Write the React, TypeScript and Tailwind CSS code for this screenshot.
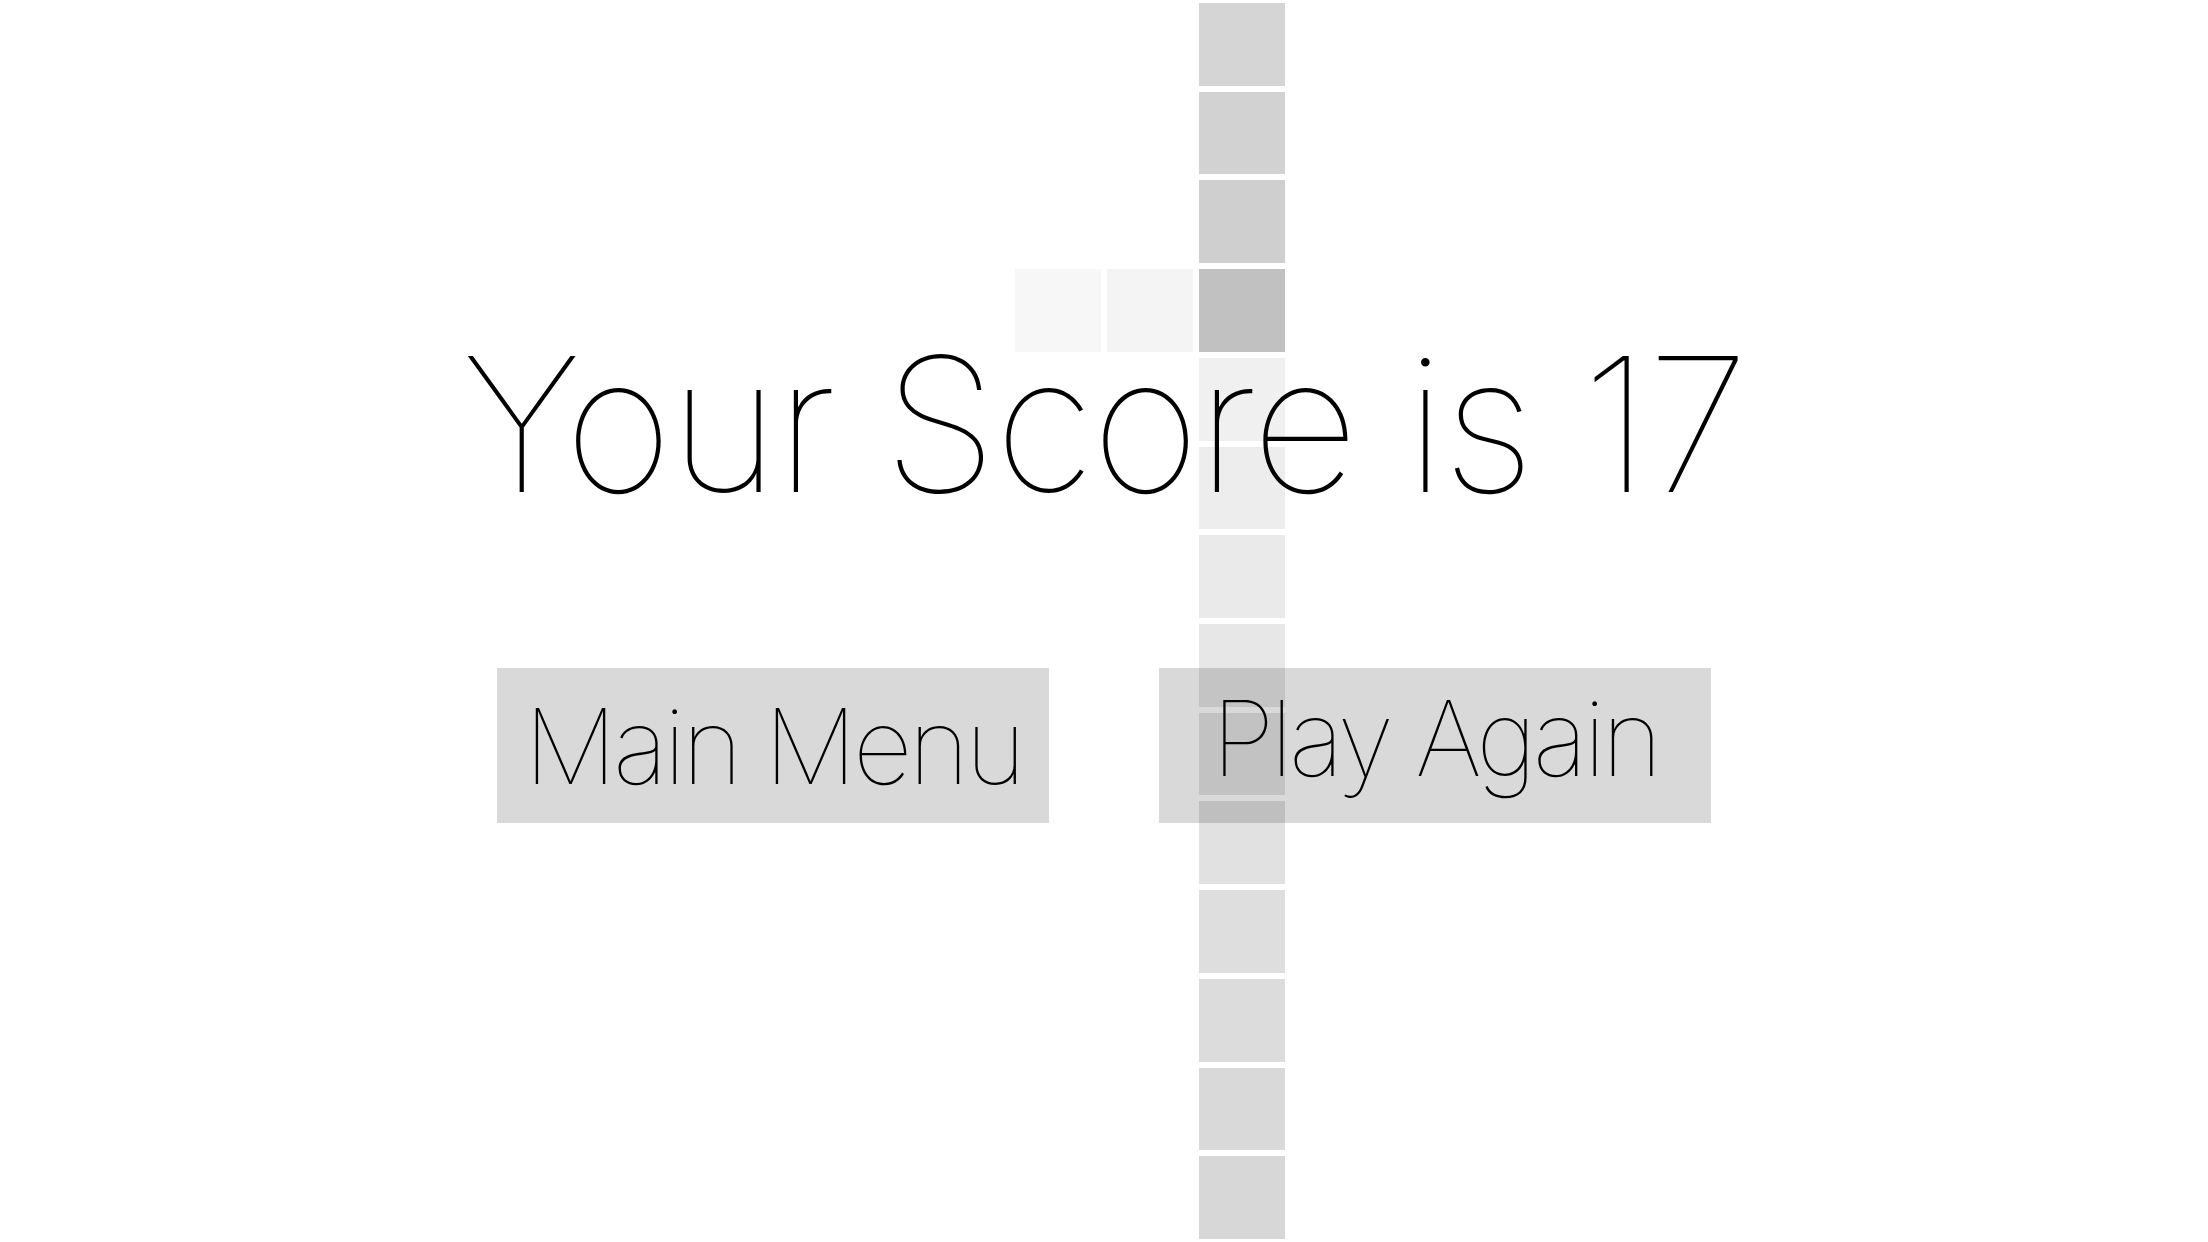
import React from "react";

type Block = { c: string; r: string; bg: string };

const blocks: Block[] = [
  { c: "col-start-12", r: "row-start-4", bg: "bg-[#f7f7f7]" },
  { c: "col-start-13", r: "row-start-4", bg: "bg-[#f4f4f4]" },
  { c: "col-start-14", r: "row-start-1", bg: "bg-[#d5d5d5]" },
  { c: "col-start-14", r: "row-start-2", bg: "bg-[#d2d2d2]" },
  { c: "col-start-14", r: "row-start-3", bg: "bg-[#cfcfcf]" },
  { c: "col-start-14", r: "row-start-4", bg: "bg-[#c1c1c1]" },
  { c: "col-start-14", r: "row-start-5", bg: "bg-[#f0f0f0]" },
  { c: "col-start-14", r: "row-start-6", bg: "bg-[#ededed]" },
  { c: "col-start-14", r: "row-start-7", bg: "bg-[#eaeaea]" },
  { c: "col-start-14", r: "row-start-8", bg: "bg-[#e7e7e7]" },
  { c: "col-start-14", r: "row-start-9", bg: "bg-[#e4e4e4]" },
  { c: "col-start-14", r: "row-start-10", bg: "bg-[#e1e1e1]" },
  { c: "col-start-14", r: "row-start-11", bg: "bg-[#dedede]" },
  { c: "col-start-14", r: "row-start-12", bg: "bg-[#dcdcdc]" },
  { c: "col-start-14", r: "row-start-13", bg: "bg-[#d9d9d9]" },
  { c: "col-start-14", r: "row-start-14", bg: "bg-[#d7d7d7]" },
];

export default function App() {
  return (
    <div
      className="relative w-screen h-screen overflow-hidden bg-white text-black"
      style={{ fontFamily: "Inter, 'Helvetica Neue', 'Liberation Sans', sans-serif" }}
    >
      {/* game board */}
      <div className="absolute inset-0 grid grid-cols-[repeat(24,1fr)] grid-rows-[repeat(14,1fr)]">
        {blocks.map((b, i) => (
          <div key={i} className={`${b.c} ${b.r} m-[3px] ${b.bg}`} />
        ))}
      </div>

      {/* overlay content */}
      <div className="absolute inset-0 flex flex-col items-center">
        <h1 className="mt-[331px] text-[187px] leading-none font-thin tracking-[-3px] whitespace-nowrap">
          Your Score is 17
        </h1>
        <div className="mt-[150px] flex gap-[110px]">
          <button className="w-[552px] h-[155px] bg-black/15 flex items-center justify-center text-[104px] leading-none font-thin tracking-[-4px] whitespace-nowrap">
            Main Menu
          </button>
          <button className="w-[552px] h-[155px] bg-black/15 flex items-center justify-center pb-[16px] text-[104px] leading-none font-thin tracking-[-4px] whitespace-nowrap">
            Play Again
          </button>
        </div>
      </div>
    </div>
  );
}
